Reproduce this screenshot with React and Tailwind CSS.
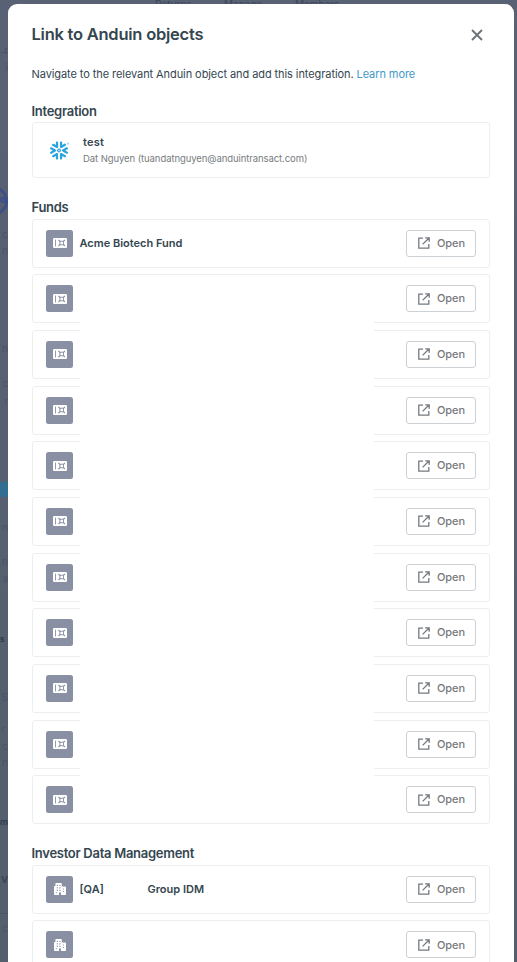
import React from 'react';
import { SiSnowflake } from 'react-icons/si';

const funds = ['Acme Biotech Fund', '', '', '', '', '', '', '', '', '', ''];

const backdropText = [
  { text: 'r', style: 'top-[42px] right-0 text-[10px]' },
  { text: 'i', style: 'top-[59px] right-0 text-[10px]' },
  { text: 'c', style: 'top-[226px] right-0 text-[10px]' },
  { text: 'n', style: 'top-[242px] right-0 text-[10px]' },
  { text: 'n', style: 'top-[340px] right-0 text-[10px]' },
  { text: 'c', style: 'top-[375px] right-0 text-[10px]' },
  { text: 'r', style: 'top-[393px] right-0 text-[10px]' },
  { text: 'n', style: 'top-[519px] right-0 text-[10px]' },
  { text: 'n', style: 'top-[553px] right-0 text-[10px]' },
  { text: 'a', style: 'top-[570px] right-0 text-[10px]' },
  { text: 's', style: 'top-[631px] left-0 text-[8px] font-bold text-[#303a4d]' },
  { text: 'S', style: 'top-[689px] right-0 text-[11px]' },
  { text: 'r', style: 'top-[721px] right-[3px] text-[10px]' },
  { text: 'c', style: 'top-[738px] right-0 text-[10px]' },
  { text: 'n', style: 'top-[754px] right-0 text-[10px]' },
  { text: 'm', style: 'top-[814px] right-0 text-[9px] font-semibold text-[#303a4d]' },
  { text: 'v', style: 'top-[871px] right-0 text-[12px] font-semibold text-[#3b4557]' },
  { text: 'c', style: 'top-[920px] right-0 text-[10px]' },
];

function Backdrop() {
  return (
    <div className="absolute inset-0 bg-gradient-to-b from-[#596174] to-[#535f6c] text-[#495367]">
      <div className="absolute -top-[1px] left-[155px] flex text-[10px] leading-none text-[#3c475a]">
        <span className="w-[69px]">Returns</span>
        <span className="w-[71px]">Manage</span>
        <span>Members</span>
      </div>
      <div className="absolute top-0 left-0 h-full w-2 overflow-hidden">
        <div className="absolute top-[186px] -left-[22px] size-[30px] rounded-full border-[3px] border-[#3f4f88]" />
        <div className="absolute top-[197px] left-0 h-[6px] w-[6px] rounded-full border-2 border-[#3f4f88]" />
        <div className="absolute top-[482px] left-0 h-[15px] w-2 bg-[#316e91]" />
        <div className="absolute top-[52px] left-0 h-px w-2 bg-[#4d566a]" />
        <div className="absolute top-[913px] left-0 h-px w-2 bg-[#4a5567]" />
        {backdropText.map((item, idx) => (
          <span key={idx} className={`absolute leading-[16px] ${item.style}`}>{item.text}</span>
        ))}
      </div>
    </div>
  );
}

function FundIcon() {
  return (
    <svg viewBox="0 0 14 10" className="h-[10px] w-[14px]" fill="none" stroke="#8a90a3" strokeWidth="0.9">
      <rect width="14" height="10" rx="1.2" fill="#fff" stroke="none" />
      <path d="M2.5 1.6v6.8" />
      <path d="M5.4 1.8l2 2M12 1.8l-2 2M5.4 8.2l2-2M12 8.2l-2-2" strokeWidth="1.1" />
      <rect x="6.9" y="3.2" width="3.6" height="3.6" />
    </svg>
  );
}

function BuildingIcon() {
  return (
    <svg viewBox="0 0 12 12" className="size-3">
      <path d="M2.2 0H7a.8.8 0 0 1 .8.8v2.7h3.4a.8.8 0 0 1 .8.8v6.9a.8.8 0 0 1-.8.8H7V9.6H5V12H.8a.8.8 0 0 1-.8-.8V3.8A.8.8 0 0 1 .8 3h.6V.8a.8.8 0 0 1 .8-.8z" fill="#fff" />
      <path d="M2.8 2.4h1.1M5.4 2.4h1.1M2.8 4.9h1.1M5.4 4.9h1.1M2.8 7.4h1.1M5.4 7.4h1.1M8.8 6h1.1M8.8 8.5h1.1M1.8 9.8h1.1" stroke="#8a90a3" strokeWidth="1.1" />
    </svg>
  );
}

function OpenButton() {
  return (
    <button className="flex h-[27px] w-[70px] items-center rounded-[3px] border border-[#ccd1d6] pl-[11px] text-[11px] font-medium tracking-[-0.1px] text-[#75797e]">
      <svg viewBox="0 0 12 12" className="mr-[7.5px] size-3" fill="none" stroke="#75797e" strokeWidth="1.3">
        <path d="M5 1.2H.8v10h10V7M7.2.8h4v4M11 1 4.6 7.4" />
      </svg>
      Open
    </button>
  );
}

function ObjectRow({ icon, children }) {
  return (
    <div className="flex h-[49px] items-center rounded-[3px] border border-[#eceeef] px-[13.5px]">
      <div className="mr-[6.5px] flex size-[27px] items-center justify-center rounded-[2.5px] bg-[#8a90a3]">{icon}</div>
      <div className="flex flex-1 text-[11px] font-semibold text-[#34464f]">{children}</div>
      <OpenButton />
    </div>
  );
}

function App() {
  return (
    <div className="relative h-[962px] w-[517px] overflow-hidden font-['Inter',sans-serif]">
      <Backdrop />
      <div className="relative mt-1 ml-2 h-[958px] w-[506px] overflow-hidden rounded-t-[9px] bg-white pr-[24px] pl-[23.5px] text-[#34464f]">
        <div className="flex h-[61px] items-center justify-between pr-[7px]">
          <h1 className="text-[16.5px] font-semibold tracking-[-0.24px]">Link to Anduin objects</h1>
          <svg viewBox="0 0 12 12" className="size-3" stroke="#6f7377" strokeWidth="1.9">
            <path d="M1 1l10 10M11 1 1 11" />
          </svg>
        </div>
        <p className="mt-[1px] text-[11px] leading-[16px] tracking-[-0.08px]">
          Navigate to the relevant Anduin object and add this integration. <a className="text-[#4299cb]">Learn more</a>
        </p>

        <h2 className="mt-[19px] text-[13px] leading-[20px] font-semibold tracking-[-0.28px]">Integration</h2>
        <div className="mt-[1px] flex h-[56px] items-center rounded-[3px] border border-[#eceeef] pl-[17px]">
          <SiSnowflake className="size-[19px] text-[#2ba5de]" />
          <div className="ml-[14.5px]">
            <div className="text-[11px] leading-[16px] font-semibold tracking-[0.2px]">test</div>
            <div className="pt-px text-[9.5px] leading-[16px] tracking-[-0.08px] text-[#777c80]">Dat Nguyen (tuandatnguyen@anduintransact.com)</div>
          </div>
        </div>

        <h2 className="mt-[19px] text-[13px] leading-[20px] font-semibold tracking-[-0.28px]">Funds</h2>
        <div className="relative mt-[1.5px] flex flex-col gap-[6.68px]">
          {funds.map((name, idx) => (
            <ObjectRow key={idx} icon={<FundIcon />}>{name}</ObjectRow>
          ))}
          <div className="absolute top-[58px] left-[48px] h-[545px] w-[294px] bg-white" />
        </div>

        <h2 className="mt-[18.5px] text-[13px] leading-[20px] font-semibold tracking-[-0.28px]">Investor Data Management</h2>
        <div className="mt-[2px] flex flex-col gap-[6.68px]">
          <ObjectRow icon={<BuildingIcon />}>
            <span className="w-[68px]">[QA]</span>
            <span>Group IDM</span>
          </ObjectRow>
          <ObjectRow icon={<BuildingIcon />} />
        </div>
      </div>
    </div>
  );
}

export default App;
